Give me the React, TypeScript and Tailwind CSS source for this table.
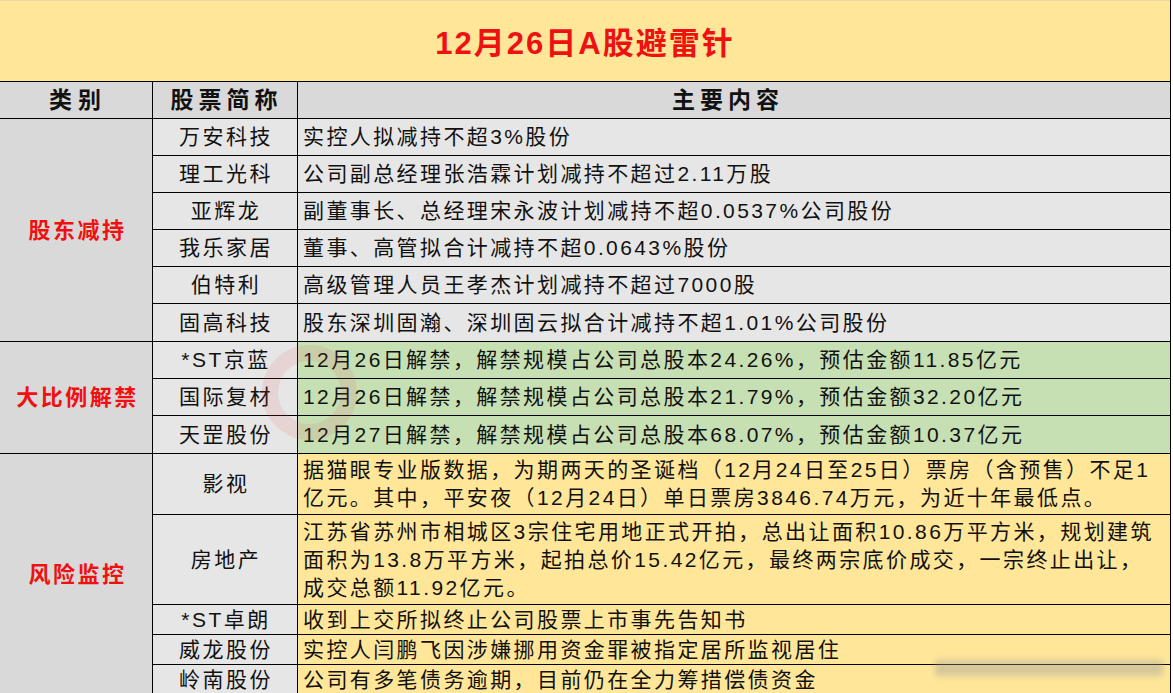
import React from "react";

const FONT = { fontFamily: '"Liberation Sans", "Noto Sans CJK SC", sans-serif' };

type Row = { name: string; lines: string[]; h: string };

const sec1: Row[] = [
  { name: "万安科技", lines: ["实控人拟减持不超3%股份"], h: "h-[37px]" },
  { name: "理工光科", lines: ["公司副总经理张浩霖计划减持不超过2.11万股"], h: "h-[37px]" },
  { name: "亚辉龙", lines: ["副董事长、总经理宋永波计划减持不超0.0537%公司股份"], h: "h-[37px]" },
  { name: "我乐家居", lines: ["董事、高管拟合计减持不超0.0643%股份"], h: "h-[37px]" },
  { name: "伯特利", lines: ["高级管理人员王孝杰计划减持不超过7000股"], h: "h-[37px]" },
  { name: "固高科技", lines: ["股东深圳固瀚、深圳固云拟合计减持不超1.01%公司股份"], h: "h-[37px]" },
];

const sec2: Row[] = [
  { name: "*ST京蓝", lines: ["12月26日解禁，解禁规模占公司总股本24.26%，预估金额11.85亿元"], h: "h-[37px]" },
  { name: "国际复材", lines: ["12月26日解禁，解禁规模占公司总股本21.79%，预估金额32.20亿元"], h: "h-[37px]" },
  { name: "天罡股份", lines: ["12月27日解禁，解禁规模占公司总股本68.07%，预估金额10.37亿元"], h: "h-[37px]" },
];

const sec3: Row[] = [
  {
    name: "影视",
    lines: [
      "据猫眼专业版数据，为期两天的圣诞档（12月24日至25日）票房（含预售）不足1",
      "亿元。其中，平安夜（12月24日）单日票房3846.74万元，为近十年最低点。",
    ],
    h: "h-[61px]",
  },
  {
    name: "房地产",
    lines: [
      "江苏省苏州市相城区3宗住宅用地正式开拍，总出让面积10.86万平方米，规划建筑",
      "面积为13.8万平方米，起拍总价15.42亿元，最终两宗底价成交，一宗终止出让，",
      "成交总额11.92亿元。",
    ],
    h: "h-[90px]",
  },
  { name: "*ST卓朗", lines: ["收到上交所拟终止公司股票上市事先告知书"], h: "h-[30px]" },
  { name: "威龙股份", lines: ["实控人闫鹏飞因涉嫌挪用资金罪被指定居所监视居住"], h: "h-[30px]" },
  { name: "岭南股份", lines: ["公司有多笔债务逾期，目前仍在全力筹措偿债资金"], h: "h-[29px]" },
];

function Section({
  label,
  rows,
  contentBg,
}: {
  label: string;
  rows: Row[];
  contentBg: string;
}) {
  return (
    <div className="flex border-b border-black">
      <div className="w-[153px] shrink-0 bg-[#d9d9d9] border-r border-black flex items-center justify-center">
        <span className="text-[22px] font-bold text-[#f01010] tracking-[2.5px] pl-[3px]">{label}</span>
      </div>
      <div className="flex-1 flex flex-col">
        {rows.map((r, i) => (
          <div
            key={r.name}
            className={"flex " + r.h + (i < rows.length - 1 ? " border-b border-black" : "")}
          >
            <div className="w-[145px] shrink-0 bg-[#e7e6e6] border-r border-black flex items-center justify-center text-[21px] tracking-[2.5px] text-[#111] pl-[2px]">
              {r.name}
            </div>
            <div className={"flex-1 flex flex-col justify-center pl-[5px] overflow-hidden " + contentBg}>
              {r.lines.map((l, j) => (
                <div
                  key={j}
                  className="whitespace-nowrap text-[21px] tracking-[2.4px] leading-[28px] text-[#111]"
                >
                  {l}
                </div>
              ))}
            </div>
          </div>
        ))}
      </div>
    </div>
  );
}

export default function App() {
  return (
    <div className="w-[1173px] h-[693px] bg-white overflow-hidden relative" style={FONT}>
      <div className="w-[1171px] border-r border-black">
        <div className="h-[82px] bg-[#ffe699] border-b border-black border-t border-t-[#e6d8a8] flex items-center justify-center pt-[6px]">
          <span className="text-[31px] font-bold text-[#ee1111] tracking-[2px]">12月26日A股避雷针</span>
        </div>
        <div className="h-[37px] flex bg-[#d9d9d9] border-b border-black">
          <div className="w-[153px] shrink-0 border-r border-black flex items-center justify-center text-[23px] font-bold tracking-[6px] pl-[4px] text-[#111]">
            类别
          </div>
          <div className="w-[145px] shrink-0 border-r border-black flex items-center justify-center text-[23px] font-bold tracking-[5px] pl-[3px] text-[#111]">
            股票简称
          </div>
          <div className="flex-1 flex items-center justify-center text-[23px] font-bold tracking-[5px] pr-[12px] text-[#111]">
            主要内容
          </div>
        </div>
        <Section label="股东减持" rows={sec1} contentBg="bg-[#e7e6e6]" />
        <Section label="大比例解禁" rows={sec2} contentBg="bg-[#c6e0b4]" />
        <Section label="风险监控" rows={sec3} contentBg="bg-[#ffe699]" />
      </div>

      <div className="pointer-events-none absolute left-[262px] top-[345px] w-[95px] h-[95px] rounded-full border-[16px] border-[#e05050] opacity-[0.12]" />
      <div className="pointer-events-none absolute left-[935px] top-[660px] w-[228px] h-[16px] bg-[#9a9a9a] opacity-40 blur-[3px]" />
    </div>
  );
}
